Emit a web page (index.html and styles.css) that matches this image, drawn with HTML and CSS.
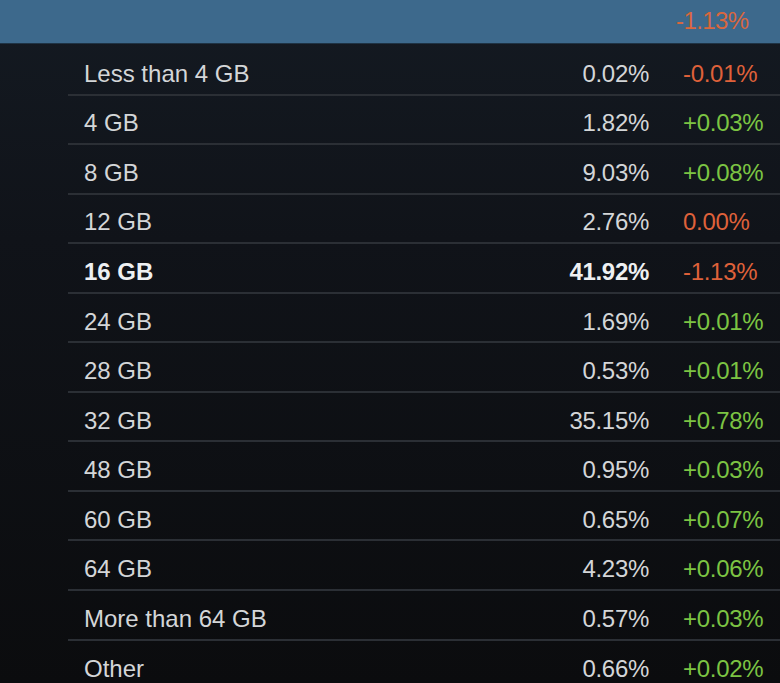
FILE: index.html
```html
<!DOCTYPE html>
<html>
<head>
<meta charset="utf-8">
<link rel="stylesheet" href="styles.css">
</head>
<body>
<div class="header">
  <span class="chg neg">-1.13%</span>
</div>
<div class="table">
  <div class="row"><span class="label">Less than 4 GB</span><span class="pct">0.02%</span><span class="chg neg">-0.01%</span></div>
  <div class="row"><span class="label">4 GB</span><span class="pct">1.82%</span><span class="chg pos">+0.03%</span></div>
  <div class="row"><span class="label">8 GB</span><span class="pct">9.03%</span><span class="chg pos">+0.08%</span></div>
  <div class="row"><span class="label">12 GB</span><span class="pct">2.76%</span><span class="chg neg">0.00%</span></div>
  <div class="row bold"><span class="label">16 GB</span><span class="pct">41.92%</span><span class="chg neg">-1.13%</span></div>
  <div class="row"><span class="label">24 GB</span><span class="pct">1.69%</span><span class="chg pos">+0.01%</span></div>
  <div class="row"><span class="label">28 GB</span><span class="pct">0.53%</span><span class="chg pos">+0.01%</span></div>
  <div class="row"><span class="label">32 GB</span><span class="pct">35.15%</span><span class="chg pos">+0.78%</span></div>
  <div class="row"><span class="label">48 GB</span><span class="pct">0.95%</span><span class="chg pos">+0.03%</span></div>
  <div class="row"><span class="label">60 GB</span><span class="pct">0.65%</span><span class="chg pos">+0.07%</span></div>
  <div class="row"><span class="label">64 GB</span><span class="pct">4.23%</span><span class="chg pos">+0.06%</span></div>
  <div class="row"><span class="label">More than 64 GB</span><span class="pct">0.57%</span><span class="chg pos">+0.03%</span></div>
  <div class="row"><span class="label">Other</span><span class="pct">0.66%</span><span class="chg pos">+0.02%</span></div>
</div>
</body>
</html>
```
FILE: styles.css
```css
html, body {
  margin: 0;
  padding: 0;
}
body {
  width: 780px;
  height: 683px;
  overflow: hidden;
  background: linear-gradient(180deg, #141a22 0%, #101319 35%, #0b0c0e 100%);
  font-family: "Liberation Sans", Arial, sans-serif;
  font-size: 24px;
  color: #d4d6d8;
}
.header {
  height: 44px;
  background: #3d698c;
  border-bottom: 1px solid #1f3344;
  box-sizing: border-box;
  display: flex;
  align-items: center;
  padding-left: 676px;
  padding-bottom: 2px;
}
.header .chg {
  color: #d8673f;
  letter-spacing: -0.6px;
}
.table {
  margin-left: 68px;
  padding-top: 2px;
}
.row {
  display: flex;
  align-items: center;
  height: 49.55px;
  box-sizing: border-box;
  padding-left: 16px;
  padding-top: 8px;
  border-bottom: 2px solid #2b2f35;
}
.row:last-child {
  border-bottom: none;
}
.label {
  flex: 1;
}
.pct {
  width: 120px;
  text-align: right;
  letter-spacing: -0.3px;
}
.chg {
  width: 97px;
  margin-left: 34px;
  letter-spacing: -0.3px;
}
.header .chg {
  margin-left: 0;
}
.pos {
  color: #7cc443;
}
.neg {
  color: #df613a;
}
.bold .label, .bold .pct {
  font-weight: bold;
  color: #eef0f2;
}
```
